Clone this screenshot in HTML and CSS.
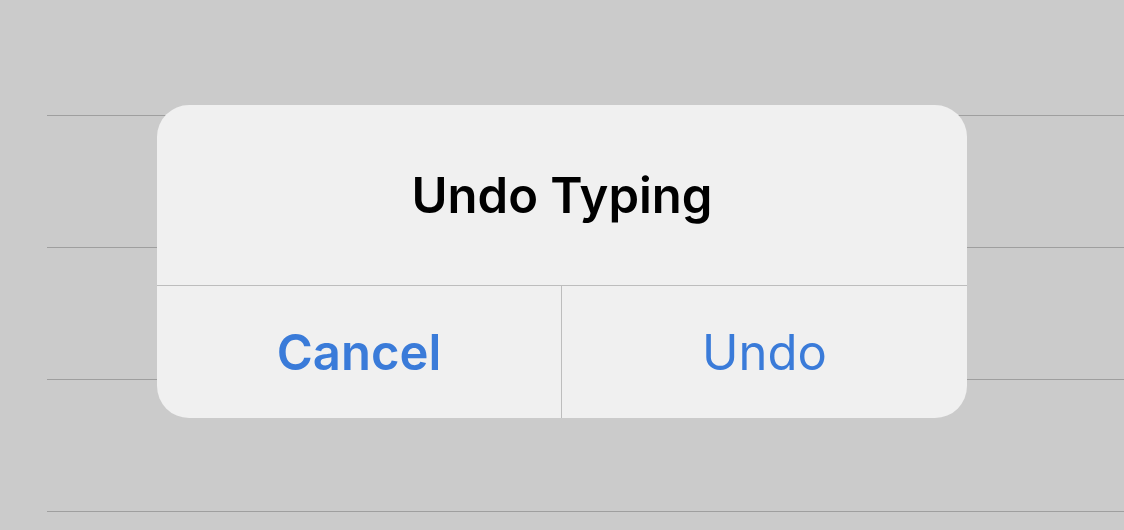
FILE: index.html
```html
<!DOCTYPE html>
<html lang="en">
<head>
<meta charset="UTF-8" />
<meta name="viewport" content="width=device-width, initial-scale=1.0" />
<title>Undo Typing</title>
<link rel="stylesheet" href="styles.css">
</head>
<body>
<!-- rows of the page behind the alert -->
<div class="list">
    <div class="line"></div>
    <div class="line"></div>
    <div class="line"></div>
    <div class="line"></div>
</div>

<div class="alert" role="alertdialog" aria-labelledby="alertTitle">
    <div class="alert-title" id="alertTitle">Undo Typing</div>
    <div class="alert-actions">
        <button class="btn btn-cancel">Cancel</button>
        <button class="btn">Undo</button>
    </div>
</div>
</body>
</html>
```

FILE: styles.css
```css
:root{
    --bg:#cbcbcb;
    --sheet:#f0f0f0;
    --rule:#9f9f9f;
    --divider:#bdbdbd;
    --blue:#3a7bd9;
    --radius:32px;
}
html,body{height:100%}
body{
    margin:0;
    background:var(--bg);
    font-family:Inter,"Liberation Sans",Arial,sans-serif;
    overflow:hidden;
    position:relative;
}

/* ── List behind ── */
.list{margin-left:47px}
.line{height:131px;border-bottom:1px solid var(--rule)}
.line:first-child{height:115px}

/* ── Alert ── */
.alert{
    position:absolute;
    left:157px;
    top:105px;
    width:810px;
    height:313px;
    background:var(--sheet);
    border-radius:var(--radius);
    display:flex;
    flex-direction:column;
    overflow:hidden;
}
.alert-title{
    height:180px;
    display:flex;
    align-items:center;
    justify-content:center;
    font-size:49px;
    font-weight:600;
    color:#000;
    border-bottom:1px solid var(--divider);
}
.alert-actions{flex:1;display:grid;grid-template-columns:1fr 1fr}
.btn{
    border:0;
    background:none;
    font:inherit;
    font-size:49px;
    font-weight:400;
    color:var(--blue);
    padding:0;
    cursor:pointer;
}
.btn-cancel{font-weight:600;border-right:1px solid var(--divider)}
```
